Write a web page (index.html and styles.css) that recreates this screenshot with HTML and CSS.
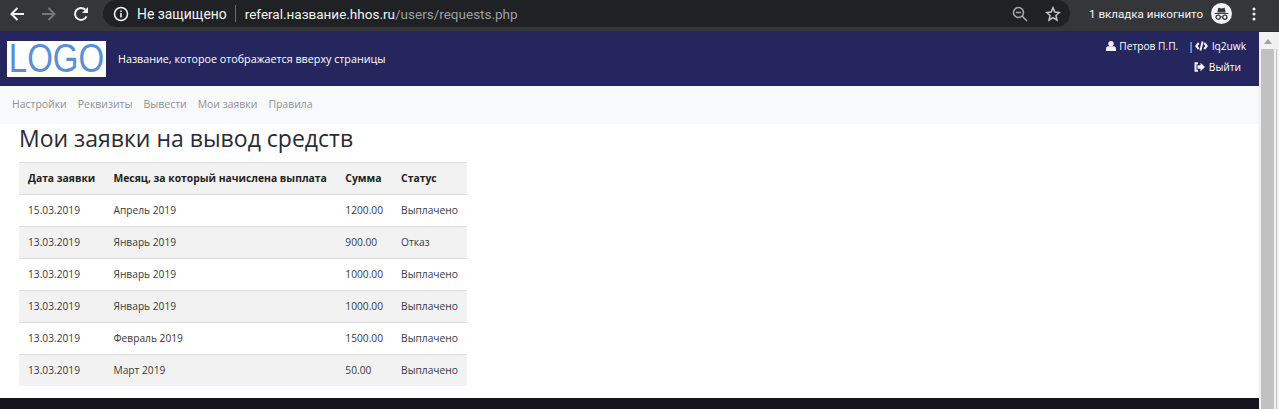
FILE: index.html
```html
<!DOCTYPE html>
<html lang="ru">
<head>
<meta charset="utf-8">
<title>Мои заявки</title>
<link rel="stylesheet" href="styles.css">
</head>
<body>
<div class="chrome">
  <svg class="nav-icon back" width="16" height="16" viewBox="0 0 16 16"><path d="M15 8H2.500M8.500 2L2.500 8l6 6" fill="none" stroke="#f1f3f4" stroke-width="2"/></svg>
  <svg class="nav-icon fwd" width="16" height="16" viewBox="0 0 16 16"><path d="M1 8h12.500M7.500 2l6 6-6 6" fill="none" stroke="#74787b" stroke-width="2"/></svg>
  <svg class="nav-icon reload" width="16" height="16" viewBox="0 0 16 16"><path d="M13.500 10.300A6 6 0 1 1 12.400 3.800" fill="none" stroke="#f1f3f4" stroke-width="2"/><path d="M15 1v6H9z" fill="#f1f3f4"/></svg>
  <div class="omnibox">
    <svg class="info" width="16" height="16" viewBox="0 0 16 16"><circle cx="8" cy="8" r="6.500" fill="none" stroke="#f1f3f4" stroke-width="1.500"/><path d="M7.200 7h1.600v4.600H7.200zM7.200 4.400h1.600V6H7.200z" fill="#f1f3f4"/></svg>
    <span class="secure">Не защищено</span>
    <span class="divider"></span>
    <span class="url"><span class="host">referal.название.hhos.ru</span>/users/requests.php</span>
    <svg class="zoom-icon" width="16" height="16" viewBox="0 0 16 16"><circle cx="6.500" cy="6.500" r="5" fill="none" stroke="#a8abad" stroke-width="1.500"/><path d="M4 6.500h5M10 10l5 5" fill="none" stroke="#a8abad" stroke-width="1.500"/></svg>
    <svg class="star-icon" width="16" height="16" viewBox="0 0 16 16"><path d="M8 1.800l1.800 4.300 4.600.4-3.500 3 1.100 4.600L8 11.600l-4 2.500 1.100-4.600-3.500-3 4.600-.4z" fill="none" stroke="#c4c7c9" stroke-width="1.500"/></svg>
  </div>
  <span class="incognito-label">1 вкладка инкогнито</span>
  <svg class="incognito" width="21" height="21" viewBox="0 0 20 20"><circle cx="10" cy="10" r="10" fill="#f1f3f4"/><path d="M3.500 9.500h13v1h-13zM6 9l1-4.500 3 .8 3-.8 1 4.500z" fill="#35363a"/><circle cx="6.800" cy="13.500" r="2" fill="none" stroke="#35363a" stroke-width="1.200"/><circle cx="13.200" cy="13.500" r="2" fill="none" stroke="#35363a" stroke-width="1.200"/><path d="M8.800 13.200h2.400" stroke="#35363a"/></svg>
  <svg class="menu" width="4" height="14" viewBox="0 0 4 14"><circle cx="2" cy="2" r="1.500" fill="#f1f3f4"/><circle cx="2" cy="7" r="1.500" fill="#f1f3f4"/><circle cx="2" cy="12" r="1.500" fill="#f1f3f4"/></svg>
</div>
<div class="viewport">
  <div class="page">
    <header class="top">
      <div class="logo"><span class="logo-text">LOGO</span></div>
      <div class="site-name">Название, которое отображается вверху страницы</div>
      <div class="user">
        <div class="user-line">
          <svg class="ico" width="10" height="10" viewBox="0 0 10 10"><circle cx="5" cy="2.800" r="2.700" fill="#f0f0f8"/><path d="M0 10V7.500Q0 5.800 2 5.300h6Q10 5.800 10 7.500V10z" fill="#f0f0f8"/></svg>
          <span class="name">Петров П.П.</span>
          <span class="sep">|</span>
          <svg class="ico code" width="13" height="10" viewBox="0 0 13 10"><path d="M3.700 2L1.200 5l2.500 3M9.300 2L11.800 5 9.300 8M7.600.6L5.400 9.400" fill="none" stroke="#f0f0f8" stroke-width="2"/></svg>
          <span>lq2uwk</span>
        </div>
        <div class="user-line logout">
          <svg class="ico" width="11" height="10" viewBox="0 0 11 10"><path d="M4 1.200H1.500v7.600H4" fill="none" stroke="#f0f0f8" stroke-width="2"/><path d="M3.500 3.300H6.500V.8L11 5 6.500 9.200V6.700H3.500z" fill="#f0f0f8"/></svg>
          <span>Выйти</span>
        </div>
      </div>
    </header>
    <nav class="menu-bar">
      <a>Настройки</a><a>Реквизиты</a><a>Вывести</a><a>Мои заявки</a><a>Правила</a>
    </nav>
    <main class="content">
      <h1>Мои заявки на вывод средств</h1>
      <table>
        <thead>
          <tr><th>Дата заявки</th><th>Месяц, за который начислена выплата</th><th>Сумма</th><th>Статус</th></tr>
        </thead>
        <tbody>
          <tr><td>15.03.2019</td><td>Апрель 2019</td><td>1200.00</td><td>Выплачено</td></tr>
          <tr><td>13.03.2019</td><td>Январь 2019</td><td>900.00</td><td>Отказ</td></tr>
          <tr><td>13.03.2019</td><td>Январь 2019</td><td>1000.00</td><td>Выплачено</td></tr>
          <tr><td>13.03.2019</td><td>Январь 2019</td><td>1000.00</td><td>Выплачено</td></tr>
          <tr><td>13.03.2019</td><td>Февраль 2019</td><td>1500.00</td><td>Выплачено</td></tr>
          <tr><td>13.03.2019</td><td>Март 2019</td><td>50.00</td><td>Выплачено</td></tr>
        </tbody>
      </table>
    </main>
    <footer class="bottom"></footer>
  </div>
  <div class="scrollbar">
    <svg class="arrow" width="8" height="5" viewBox="0 0 8 5"><path d="M4 0L8 5H0z" fill="#a3a3a3"/></svg>
    <div class="rail">
      <div class="thumb"></div>
      <div class="stripe"></div>
    </div>
  </div>
</div>
</body>
</html>
```
FILE: styles.css
```css
* { box-sizing: border-box; }
html, body { margin: 0; height: 100%; overflow: hidden; }
body {
  display: flex;
  flex-direction: column;
  font-family: "Open Sans", sans-serif;
  background: #fff;
}
.chrome {
  height: 32px;
  flex: none;
  background: #35363a;
  border-bottom: 1px solid #2a2b2e;
  display: flex;
  align-items: center;
  padding: 0 0 4px 9px;
  font-family: Roboto, "Noto Sans", sans-serif;
  color: #f1f3f4;
}
.nav-icon { flex: none; }
.back { margin-right: 16px; }
.fwd { margin-right: 16px; }
.reload { margin-right: 14px; }
.omnibox {
  width: 967px;
  height: 27px;
  background: #202124;
  border-radius: 14px;
  display: flex;
  align-items: center;
  padding-left: 10px;
  font-size: 13.900px;
}
.info { margin-right: 8px; flex: none; }
.secure { white-space: nowrap; }
.divider { width: 1px; height: 17px; background: #6a6c6f; margin: 0 9px 0 8px; }
.url { color: #9aa0a6; white-space: nowrap; font-size: 13.500px; }
.host { color: #f1f3f4; }
.zoom-icon { margin-left: auto; flex: none; }
.star-icon { margin: 0 9px 0 17px; flex: none; }
.incognito-label { margin-left: 19px; font-size: 11.600px; white-space: nowrap; }
.incognito { margin-left: 8px; flex: none; }
.menu { margin-left: 20px; flex: none; }

.viewport { flex: 1; display: flex; min-height: 0; }
.page { flex: 1; min-width: 0; display: flex; flex-direction: column; }
.top {
  height: 54px;
  flex: none;
  background: #26265f;
  display: flex;
  align-items: flex-start;
  padding: 9px 13px 0 7px;
  color: #fff;
  font-size: 10px;
}
.logo {
  width: 99px;
  height: 36px;
  background: #fff;
  color: #5b8fd3;
  font-family: "Liberation Sans", sans-serif;
  font-size: 33px;
  line-height: 36px;
  text-align: center;
}
.logo-text { display: inline-block; transform: scaleY(1.21); }
.site-name { margin: 11px 0 0 12px; font-size: 10.740px; line-height: 15px; }
.user { margin-left: auto; display: flex; flex-direction: column; align-items: flex-end; }
.user-line { display: flex; align-items: center; height: 15px; margin-top: -3px; white-space: nowrap; font-size: 10.200px; }
.name { margin-left: 3px; }
.sep { margin: 0 1px 0 10px; }
.code { margin-right: 4px; }
.logout { margin: 6px 5px 0 0; }
.logout .ico { margin-right: 4px; }

.menu-bar {
  height: 38px;
  flex: none;
  background: #f8f9fa;
  display: flex;
  align-items: center;
  gap: 11px;
  padding: 0 12px 2px;
  font-size: 10.450px;
  color: #8f9296;
}
.content { flex: 1; padding: 0 19px; min-height: 0; }
h1 {
  margin: 0;
  height: 38px;
  font-size: 23px;
  font-weight: 400;
  line-height: 28px;
  color: #2b2b33;
}
table { border-collapse: collapse; width: 448px; font-size: 10.200px; color: #3a3a3a; }
th { text-align: left; font-weight: 700; font-size: 10.350px; color: #222; background: #f2f2f2; border-top: 1px solid #dedede; }
th, td { height: 32px; padding: 0 9px 1px; border-bottom: 1px solid #dedede; white-space: nowrap; }
tbody tr:nth-child(even) td { background: #f2f2f2; }
tbody tr:last-child td { border-bottom: 0; height: 31px; }
.bottom { height: 11px; flex: none; background: #15151f; }
.scrollbar {
  width: 20px;
  flex: none;
  background: #f1f1f1;
  display: flex;
  flex-direction: column;
  align-items: flex-start;
  padding-top: 7px;
}
.arrow { flex: none; margin-left: 5px; }
.rail { flex: 1; display: flex; gap: 2px; margin-top: 5px; padding-left: 2px; }
.thumb { width: 13px; background: #c1c1c1; }
.stripe { width: 1px; background: #c1c1c1; }
```
